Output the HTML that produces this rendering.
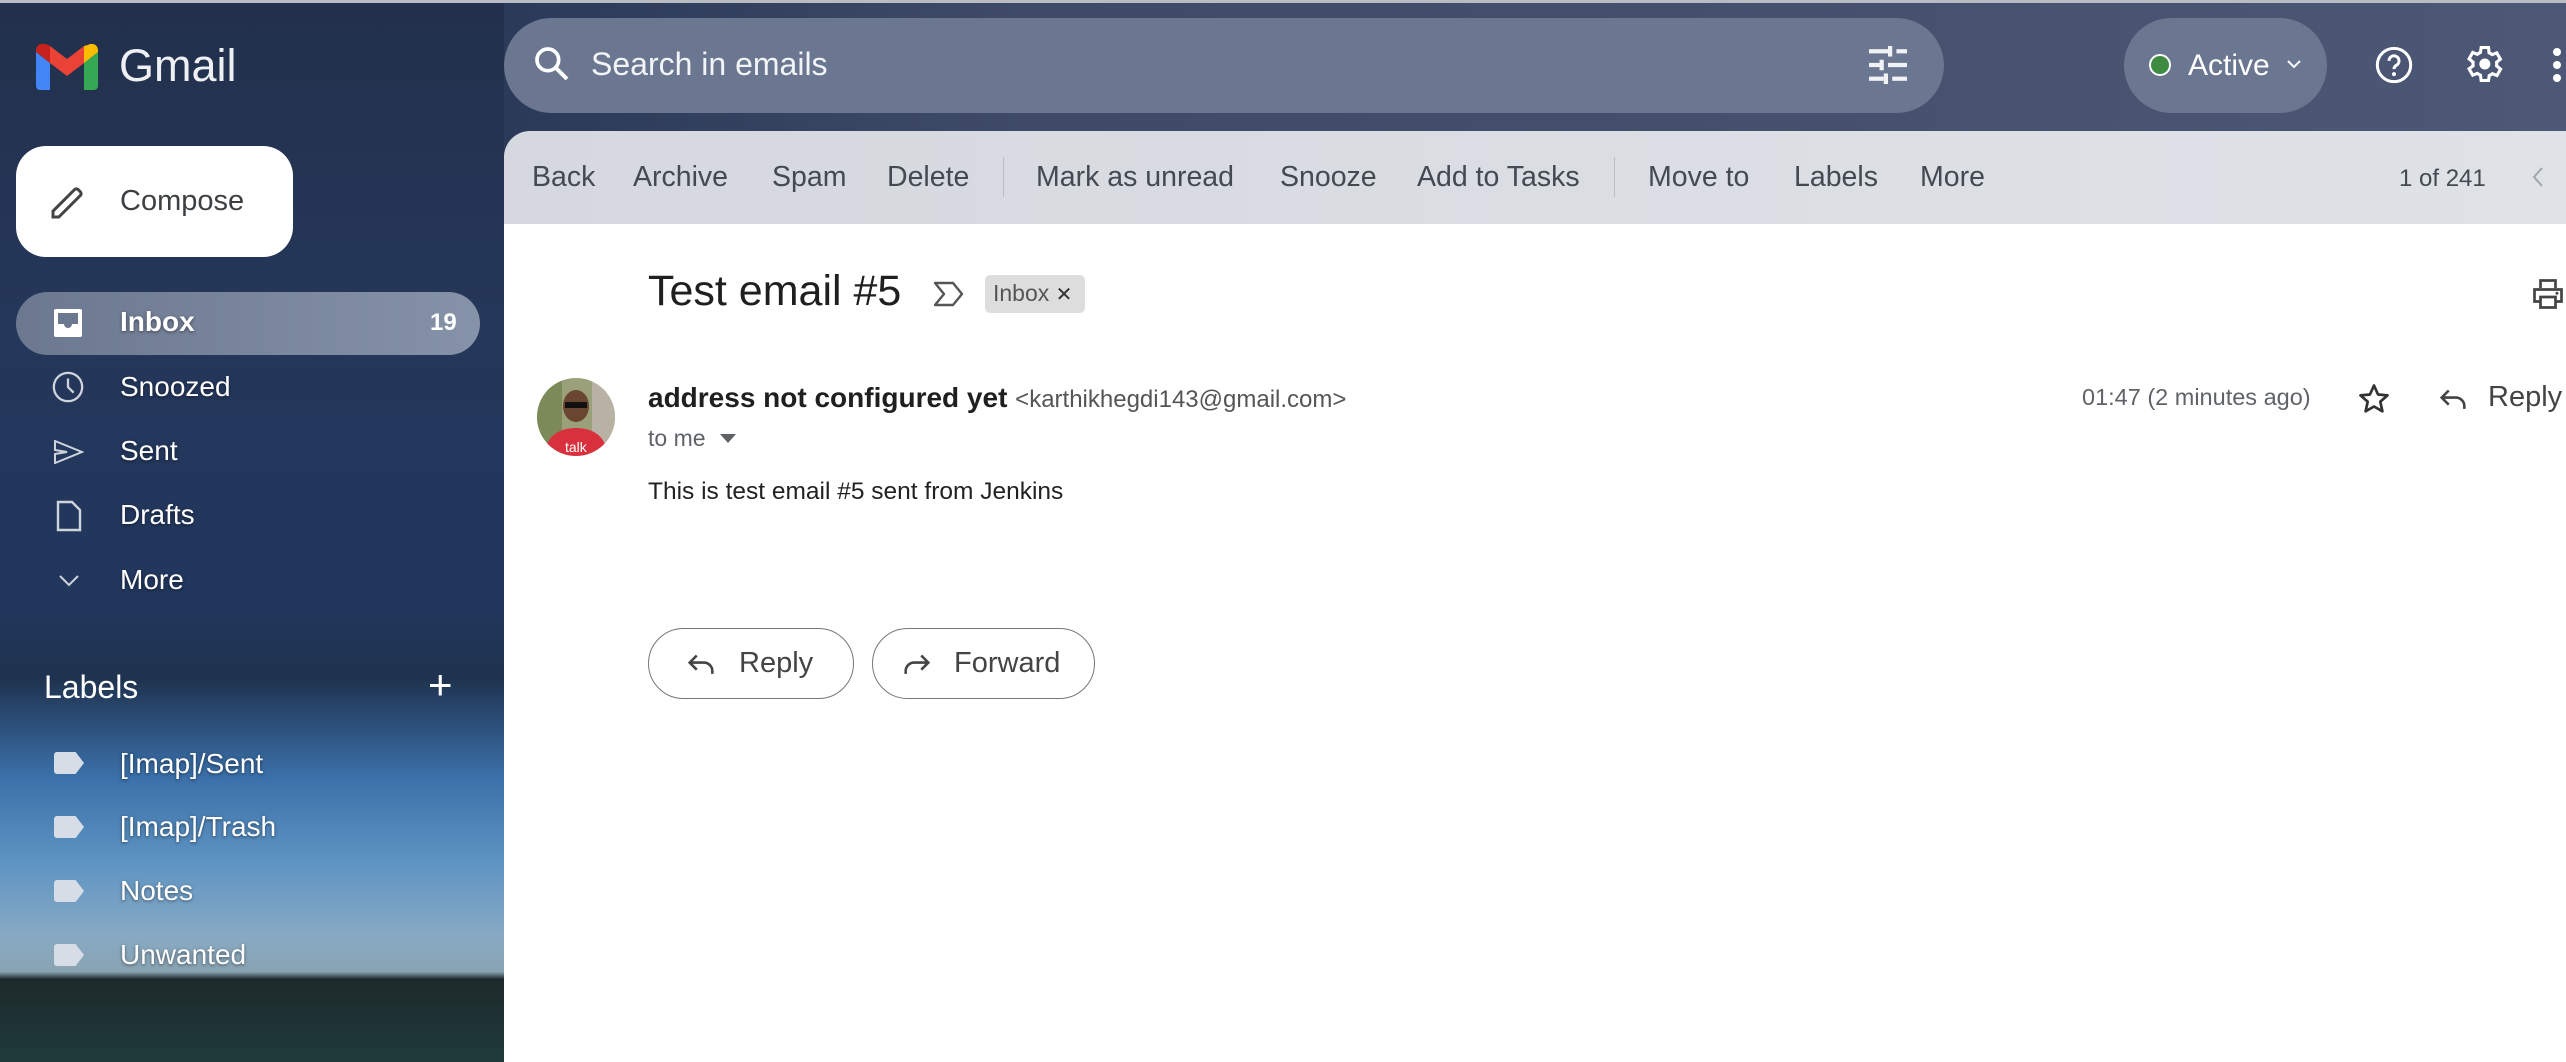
<!DOCTYPE html>
<html><head><meta charset="utf-8"><style>
*{margin:0;padding:0;box-sizing:border-box}
body{width:2566px;height:1062px;overflow:hidden;position:relative;font-family:"Liberation Sans",sans-serif;background:#fff}
.a{position:absolute;white-space:nowrap}
#bg{position:absolute;left:0;top:0;width:2566px;height:224px;background:linear-gradient(90deg,#23324d 0%,#2a3a58 20%,#3e4a68 40%,#45506d 70%,#4c5875 100%)}
#side{position:absolute;left:0;top:0;width:504px;height:1062px;background:linear-gradient(180deg,#22304b 0%,#25375a 30%,#22375e 55%,#1f3350 64%,#3a6fa8 73%,#5d93c2 81%,#87aac4 88%,#8aa3b2 91.5%,#1d2a2c 92.2%,#1f3a3a 100%)}
.top{position:absolute;left:0;top:0;width:2566px;height:3px;background:#b9bcc2}
.pill{position:absolute;background:rgba(140,150,172,.55);border-radius:48px}
#tb{position:absolute;left:504px;top:131px;width:2062px;height:93px;background:linear-gradient(90deg,#d5d9df,#dfe2e7);border-radius:26px 0 0 0}
.tbt{position:absolute;top:161px;font-size:28.5px;color:#444a52}
.nav{position:absolute;left:120px;font-size:28px;color:#fff;text-shadow:0 1px 3px rgba(0,0,0,.5)}
.lab{position:absolute;left:54px;width:30px;height:22px;background:#d7dde6;clip-path:polygon(0 0,72% 0,100% 50%,72% 100%,0 100%);border-radius:3px}
.sep{position:absolute;top:157px;width:1px;height:40px;background:#b9bec6}
</style></head><body>
<div id="bg"></div>
<div id="side"></div>
<div class="top"></div>

<svg class="a" style="left:36px;top:44px" width="62" height="46" viewBox="0 0 62 46">
<path d="M0 8v34a4 4 0 0 0 4 4h10V19z" fill="#4285f4"/>
<path d="M48 46h10a4 4 0 0 0 4-4V8L48 19z" fill="#34a853"/>
<path d="M48 2v17l14-11V6c0-5-6-8-10-5z" fill="#fbbc04"/>
<path d="M14 19V2l17 13L48 2v17L31 32z" fill="#ea4335"/>
<path d="M0 6v2l14 11V2L10 0C6-2 0 1 0 6z" fill="#c5221f"/>
</svg>
<div class="a" style="left:119px;top:40px;font-size:45px;color:#eef0f4">Gmail</div>

<div class="pill" style="left:504px;top:18px;width:1440px;height:95px;background:#6b7690"></div>
<svg class="a" style="left:532px;top:44px" width="40" height="40" viewBox="0 0 24 24"><circle cx="9.5" cy="9.5" r="6.5" fill="none" stroke="#fff" stroke-width="2.2"/><path d="M14.5 14.5L21 21" stroke="#fff" stroke-width="2.4"/></svg>
<div class="a" style="left:591px;top:46px;font-size:32px;color:#f2f4f7">Search in emails</div>
<svg class="a" style="left:1869px;top:46px" width="38" height="38" viewBox="0 0 36 36"><g fill="#f0f2f5"><rect x="0" y="3" width="18" height="4"/><rect x="26" y="3" width="10" height="4"/><rect x="18" y="0" width="4" height="10"/><rect x="0" y="16" width="10" height="4"/><rect x="18" y="16" width="18" height="4"/><rect x="10" y="13" width="4" height="10"/><rect x="0" y="29" width="14" height="4"/><rect x="22" y="29" width="14" height="4"/><rect x="14" y="26" width="4" height="10"/></g></svg>

<div class="pill" style="left:2124px;top:18px;width:203px;height:95px;background:#6b7690"></div>
<div class="a" style="left:2149px;top:54px;width:22px;height:22px;border-radius:50%;background:#3d8b40;border:2px solid #fff"></div>
<div class="a" style="left:2188px;top:49px;font-size:30px;color:#fff">Active</div>
<svg class="a" style="left:2286px;top:58px" width="16" height="12" viewBox="0 0 16 12"><path d="M2 3l6 6 6-6" fill="none" stroke="#fff" stroke-width="2"/></svg>
<svg class="a" style="left:2374px;top:45px" width="40" height="40" viewBox="0 0 24 24"><circle cx="12" cy="12" r="10" fill="none" stroke="#fff" stroke-width="1.8"/><path d="M9 9.5a3 3 0 1 1 4.5 2.6c-1 .6-1.5 1.2-1.5 2.4" fill="none" stroke="#fff" stroke-width="1.8"/><circle cx="12" cy="17.5" r="1.2" fill="#fff"/></svg>
<svg class="a" style="left:2461px;top:42px" width="44" height="44" viewBox="0 0 24 24"><path d="M19.4 13a7.6 7.6 0 0 0 0-2l2.1-1.6-2-3.5-2.5 1a7 7 0 0 0-1.7-1L15 3h-4l-.4 2.7a7 7 0 0 0-1.7 1l-2.5-1-2 3.5L6.6 11a7.6 7.6 0 0 0 0 2l-2.2 1.6 2 3.5 2.5-1a7 7 0 0 0 1.7 1L11 21h4l.4-2.7a7 7 0 0 0 1.7-1l2.5 1 2-3.5z" fill="none" stroke="#fff" stroke-width="1.7"/><circle cx="13" cy="12" r="3" fill="#fff"/></svg>
<div class="a" style="left:2553px;top:48px;width:8px;height:8px;border-radius:50%;background:#fff;box-shadow:0 13px 0 #fff,0 26px 0 #fff"></div>

<div class="a" style="left:16px;top:146px;width:277px;height:111px;background:#fff;border-radius:30px"></div>
<svg class="a" style="left:48px;top:182px" width="40" height="40" viewBox="0 0 24 24"><path d="M3 21v-3.5L16 4.5a1.5 1.5 0 0 1 2 0l1.5 1.5a1.5 1.5 0 0 1 0 2L6.5 21z" fill="none" stroke="#444" stroke-width="1.8"/></svg>
<div class="a" style="left:120px;top:185px;font-size:29px;color:#3c4043">Compose</div>

<div class="a" style="left:16px;top:292px;width:464px;height:63px;border-radius:32px;background:linear-gradient(90deg,#6b7890,#8592a8)"></div>
<svg class="a" style="left:54px;top:309px" width="28" height="28" viewBox="0 0 28 28"><path d="M0 2a2 2 0 0 1 2-2h24a2 2 0 0 1 2 2v24a2 2 0 0 1-2 2H2a2 2 0 0 1-2-2z" fill="#fff"/><path d="M4 4h20v11h-6a4 4 0 0 1-8 0H4z" fill="#6b7890"/></svg>
<div class="nav" style="top:306px;font-weight:bold">Inbox</div>
<div class="a" style="left:430px;top:309px;font-size:24px;font-weight:bold;color:#fff">19</div>
<svg class="a" style="left:51px;top:370px" width="34" height="34" viewBox="0 0 24 24"><circle cx="12" cy="12" r="10" fill="none" stroke="#cfd4dc" stroke-width="1.6"/><path d="M12 6v6l4 4" fill="none" stroke="#cfd4dc" stroke-width="1.6"/></svg>
<div class="nav" style="top:371px">Snoozed</div>
<svg class="a" style="left:54px;top:440px" width="30" height="24" viewBox="0 0 30 24"><path d="M1 1l27 11L1 23v-9l12-2-12-2z" fill="none" stroke="#cfd4dc" stroke-width="2"/></svg>
<div class="nav" style="top:435px">Sent</div>
<svg class="a" style="left:56px;top:500px" width="26" height="32" viewBox="0 0 26 32"><path d="M2 2h14l8 8v20H2z" fill="none" stroke="#cfd4dc" stroke-width="2.4"/></svg>
<div class="nav" style="top:499px">Drafts</div>
<svg class="a" style="left:58px;top:574px" width="22" height="14" viewBox="0 0 22 14"><path d="M2 2l9 9 9-9" fill="none" stroke="#cfd4dc" stroke-width="2"/></svg>
<div class="nav" style="top:564px">More</div>

<div class="a" style="left:44px;top:669px;font-size:32px;color:#fff">Labels</div>
<div class="a" style="left:428px;top:661px;font-size:42px;color:#fff;font-weight:300">+</div>
<div class="lab" style="top:752px"></div><div class="nav" style="top:748px">[Imap]/Sent</div>
<div class="lab" style="top:816px"></div><div class="nav" style="top:811px">[Imap]/Trash</div>
<div class="lab" style="top:880px"></div><div class="nav" style="top:875px">Notes</div>
<div class="lab" style="top:944px"></div><div class="nav" style="top:939px">Unwanted</div>

<div id="tb"></div>
<div class="tbt" style="left:532px">Back</div>
<div class="tbt" style="left:633px">Archive</div>
<div class="tbt" style="left:772px">Spam</div>
<div class="tbt" style="left:887px">Delete</div>
<div class="sep" style="left:1003px"></div>
<div class="tbt" style="left:1036px">Mark as unread</div>
<div class="tbt" style="left:1280px">Snooze</div>
<div class="tbt" style="left:1417px">Add to Tasks</div>
<div class="sep" style="left:1614px"></div>
<div class="tbt" style="left:1648px">Move to</div>
<div class="tbt" style="left:1794px">Labels</div>
<div class="tbt" style="left:1920px">More</div>
<div class="a" style="left:2399px;top:165px;font-size:24px;color:#444a52">1 of 241</div>
<svg class="a" style="left:2530px;top:165px" width="16" height="24" viewBox="0 0 16 24"><path d="M12 3L4 12l8 9" fill="none" stroke="#a0a6ae" stroke-width="2"/></svg>

<div class="a" style="left:648px;top:267px;font-size:43px;color:#1f1f1f">Test email #5</div>
<svg class="a" style="left:932px;top:280px" width="34" height="28" viewBox="0 0 34 28"><path d="M3 3h18l9 11-9 11H3l9-11z" fill="none" stroke="#555" stroke-width="2.4" stroke-linejoin="round"/></svg>
<div class="a" style="left:985px;top:275px;width:100px;height:38px;background:#ddd;border-radius:5px;font-size:23px;color:#555;padding:5px 0 0 8px">Inbox <span style="font-size:20px;color:#333">✕</span></div>
<svg class="a" style="left:2530px;top:276px" width="36" height="36" viewBox="0 0 24 24"><path d="M7 8V3h10v5M7 17H3v-8h18v8h-4M7 14h10v7H7z" fill="none" stroke="#444" stroke-width="1.8"/><circle cx="18" cy="11.5" r="1" fill="#444"/></svg>

<svg class="a" style="left:537px;top:378px" width="78" height="78" viewBox="0 0 78 78"><defs><clipPath id="c"><circle cx="39" cy="39" r="39"/></clipPath></defs><g clip-path="url(#c)"><rect width="78" height="78" fill="#9aa07a"/><rect x="0" y="0" width="25" height="78" fill="#7c8a5a"/><rect x="55" y="0" width="23" height="78" fill="#b8b2a5"/><ellipse cx="39" cy="28" rx="13" ry="16" fill="#6a4530"/><rect x="28" y="24" width="22" height="6" fill="#111"/><path d="M8 78c0-18 12-28 31-28s31 10 31 28z" fill="#d8303c"/><text x="28" y="74" font-size="14" fill="#fff" font-family="Liberation Sans">talk</text></g></svg>
<div class="a" style="left:648px;top:382px;font-size:28px;font-weight:bold;color:#1f1f1f">address not configured yet <span style="font-weight:normal;font-size:24px;color:#555">&lt;karthikhegdi143@gmail.com&gt;</span></div>
<div class="a" style="left:648px;top:425px;font-size:23px;color:#5f6368">to me</div>
<svg class="a" style="left:720px;top:434px" width="16" height="10" viewBox="0 0 16 10"><path d="M0 0h16L8 9z" fill="#5f6368"/></svg>
<div class="a" style="left:2082px;top:384px;font-size:23.5px;color:#5f6368">01:47 (2 minutes ago)</div>
<svg class="a" style="left:2356px;top:381px" width="36" height="36" viewBox="0 0 24 24"><path d="M12 3l2.7 6 6.3.6-4.8 4.2 1.4 6.4L12 17l-5.6 3.2 1.4-6.4L3 9.6 9.3 9z" fill="none" stroke="#333" stroke-width="1.8" stroke-linejoin="round"/></svg>
<svg class="a" style="left:2436px;top:382px" width="34" height="34" viewBox="0 0 24 24"><path d="M9 6L4 11l5 5M4 11h10a6 6 0 0 1 6 6v2" fill="none" stroke="#444" stroke-width="1.8"/></svg>
<div class="a" style="left:2488px;top:381px;font-size:29px;color:#444">Reply</div>

<div class="a" style="left:648px;top:478px;font-size:24.5px;color:#222">This is test email #5 sent from Jenkins</div>

<div class="a" style="left:648px;top:628px;width:206px;height:71px;border:1.5px solid #747775;border-radius:36px"></div>
<svg class="a" style="left:684px;top:647px" width="34" height="34" viewBox="0 0 24 24"><path d="M9 6L4 11l5 5M4 11h10a6 6 0 0 1 6 6v2" fill="none" stroke="#444" stroke-width="1.8"/></svg>
<div class="a" style="left:739px;top:647px;font-size:29px;color:#444">Reply</div>
<div class="a" style="left:872px;top:628px;width:223px;height:71px;border:1.5px solid #747775;border-radius:36px"></div>
<svg class="a" style="left:900px;top:647px" width="34" height="34" viewBox="0 0 24 24"><path d="M15 6l5 5-5 5M20 11H10a6 6 0 0 0-6 6v2" fill="none" stroke="#444" stroke-width="1.8"/></svg>
<div class="a" style="left:954px;top:647px;font-size:29px;color:#444">Forward</div>
</body></html>
